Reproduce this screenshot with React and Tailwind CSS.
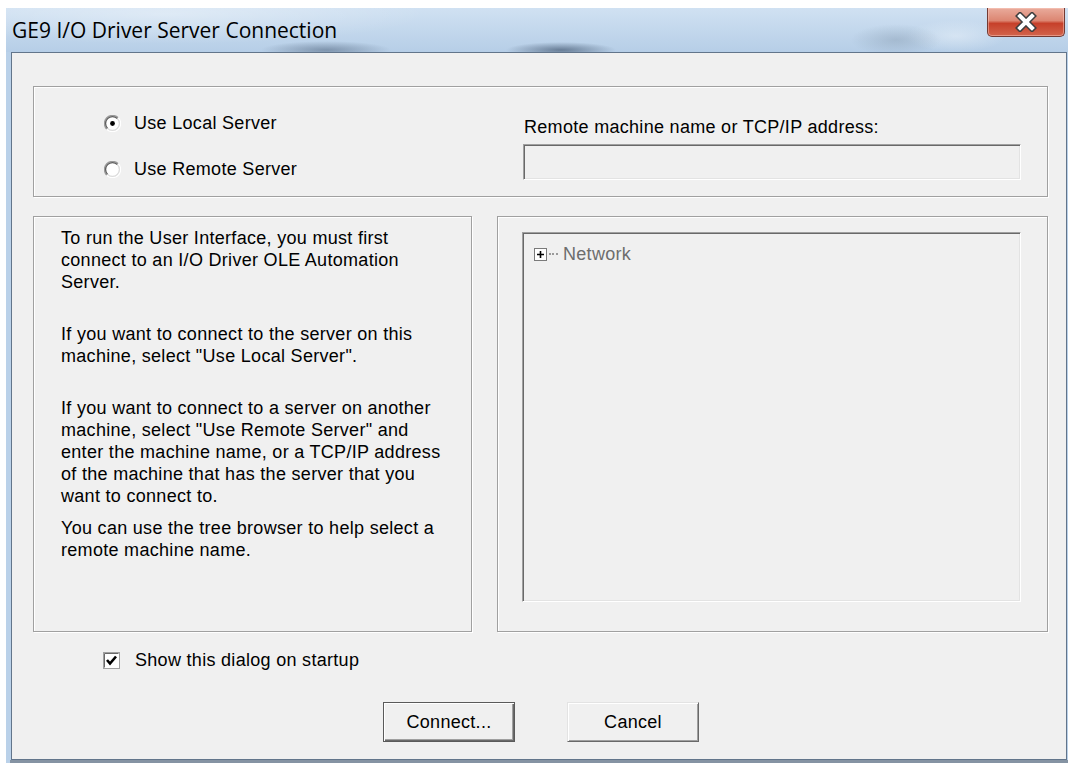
// Classic Win7 dialog: "GE9 I/O Driver Server Connection"

const RadioDot = ({ checked }) => (
  <svg width="17" height="17" viewBox="0 0 17 17" className="shrink-0">
    <circle cx="8.5" cy="8.5" r="6.5" fill="#ffffff" />
    <path d="M2.8 14.2 A8 8 0 0 1 14.2 2.8" fill="none" stroke="#9a9a9a" strokeWidth="1.3" />
    <path d="M3.6 13.4 A6.9 6.9 0 0 1 13.4 3.6" fill="none" stroke="#5e5e5e" strokeWidth="1.3" />
    <path d="M14.2 2.8 A8 8 0 0 1 2.8 14.2" fill="none" stroke="#ffffff" strokeWidth="1.3" />
    <path d="M13.4 3.6 A6.9 6.9 0 0 1 3.6 13.4" fill="none" stroke="#dcdcdc" strokeWidth="1.3" />
    {checked && <circle cx="8.5" cy="8.5" r="2.4" fill="#000000" />}
  </svg>
);

const CheckBox = () => (
  <svg width="17" height="17" viewBox="0 0 17 17" className="shrink-0">
    <rect x="0.5" y="0.5" width="16" height="16" fill="#ffffff" stroke="#a0a0a0" />
    <path d="M1.5 15.5 V1.5 H15.5" fill="none" stroke="#696969" />
    <path d="M4 8 L7 11.5 L13 4.5" fill="none" stroke="#000000" strokeWidth="2.6" />
  </svg>
);

const CloseGlyph = () => (
  <svg width="26" height="20" viewBox="0 0 26 20">
    <path d="M7 4 L19 16 M19 4 L7 16" stroke="#3d3d3d" strokeWidth="7" strokeLinecap="square" />
    <path d="M7 4 L19 16 M19 4 L7 16" stroke="#ffffff" strokeWidth="4" strokeLinecap="square" />
  </svg>
);

const GroupBox = ({ className = "", children }) => (
  <div
    className={`border border-[#a0a0a0] shadow-[inset_1px_1px_0_#ffffff,1px_1px_0_#ffffff] ${className}`}
  >
    {children}
  </div>
);

const Sunken = ({ className = "", children }) => (
  <div
    className={`border border-t-[#a0a0a0] border-l-[#a0a0a0] border-r-white border-b-white shadow-[inset_1px_1px_0_#696969,inset_-1px_-1px_0_#e3e3e3] bg-[#f0f0f0] ${className}`}
  >
    {children}
  </div>
);

const Button = ({ label, isDefault }) =>
  isDefault ? (
    <button className="w-[132px] h-[40px] border border-[#5a5a5a] bg-[#f0f0f0] shadow-[inset_1px_1px_0_#ffffff,inset_-1px_-1px_0_#696969,inset_-2px_-2px_0_#a0a0a0] text-black">
      {label}
    </button>
  ) : (
    <button className="w-[132px] h-[40px] border border-t-[#e3e3e3] border-l-[#e3e3e3] border-r-[#696969] border-b-[#696969] bg-[#f0f0f0] shadow-[inset_1px_1px_0_#ffffff,inset_-1px_-1px_0_#a0a0a0] text-black">
      {label}
    </button>
  );

const Paragraph = ({ lines, className = "" }) => (
  <div className={className}>
    {lines.map((l) => (
      <div key={l} className="whitespace-pre">
        {l}
      </div>
    ))}
  </div>
);

export default function App() {
  return (
    <div className="w-[1068px] h-[763px] bg-white pt-[8px] pl-[6px] flex flex-col overflow-hidden font-['Liberation_Sans',Arial,sans-serif]">
      <div className="flex-1 flex flex-col bg-[#bad1e9]">
        {/* title bar with blurred glass behind it */}
        <div className="h-[44px] flex items-start justify-between bg-[radial-gradient(ellipse_65px_9px_at_320px_42px,rgba(70,90,115,0.5),transparent),radial-gradient(ellipse_55px_8px_at_555px_42px,rgba(50,70,95,0.6),transparent),radial-gradient(ellipse_45px_16px_at_890px_32px,rgba(120,140,160,0.35),transparent),radial-gradient(ellipse_50px_16px_at_950px_28px,rgba(235,243,250,0.5),transparent),radial-gradient(ellipse_260px_30px_at_160px_6px,rgba(255,255,255,0.35),transparent),linear-gradient(to_bottom,#d0e1f2,#b6cee7)]">
          <div className="pl-[6px] pt-[8px] text-[21px] leading-[28px] text-[#000000] font-['Open_Sans',sans-serif]">
            GE9 I/O Driver Server Connection
          </div>
          <div className="mr-[3px] w-[78px] h-[29px] flex items-center justify-center rounded-b-[5px] border border-t-0 border-[#733a33] bg-[linear-gradient(to_bottom,#e9ab9c,#dc8672_45%,#c6402a_55%,#d2644c)] shadow-[inset_0_0_0_1px_rgba(255,210,200,0.45)]">
            <CloseGlyph />
          </div>
        </div>

        {/* client area */}
        <div className="flex-1 ml-[5px] mr-[1px] border border-[#62758b] bg-[#f0f0f0] pt-[33px] pl-[21px] pr-[18px] text-[18px] leading-[22px] tracking-[0.3px] text-black">
          <GroupBox className="h-[111px] flex">
            <div className="w-[489px] pl-[70px] pt-[25px] flex flex-col gap-[24px]">
              <label className="flex items-center gap-[13px] h-[22px]">
                <RadioDot checked />
                <span>Use Local Server</span>
              </label>
              <label className="flex items-center gap-[13px] h-[22px]">
                <RadioDot />
                <span>Use Remote Server</span>
              </label>
            </div>
            <div className="w-[498px] pt-[29px]">
              <div className="h-[22px] pl-px">Remote machine name or TCP/IP address:</div>
              <Sunken className="mt-[6px] h-[36px]" />
            </div>
          </GroupBox>

          <div className="mt-[19px] flex gap-[25px]">
            <GroupBox className="w-[439px] h-[416px] pl-[27px] pt-[10px]">
              <Paragraph
                lines={[
                  "To run the User Interface, you must first",
                  "connect to an I/O Driver OLE Automation",
                  "Server.",
                ]}
              />
              <Paragraph
                className="mt-[30px]"
                lines={[
                  "If you want to connect to the server on this",
                  'machine, select "Use Local Server".',
                ]}
              />
              <Paragraph
                className="mt-[30px]"
                lines={[
                  "If you want to connect to a server on another",
                  'machine, select "Use Remote Server" and',
                  "enter the machine name, or a TCP/IP address",
                  "of the machine that has the server that you",
                  "want to connect to.",
                ]}
              />
              <Paragraph
                className="mt-[10px]"
                lines={[
                  "You can use the tree browser to help select a",
                  "remote machine name.",
                ]}
              />
            </GroupBox>
            <GroupBox className="flex-1 h-[416px] pl-[24px] pt-[15px]">
              <Sunken className="w-[499px] h-[370px] pt-[10px] pl-[11px]">
                <div className="flex items-center h-[22px] text-[#6d6d6d]">
                  <span className="w-[13px] h-[13px] border border-[#7a7a7a] bg-white flex items-center justify-center shrink-0">
                    <svg width="9" height="9" viewBox="0 0 9 9">
                      <path d="M1 4.5 H8 M4.5 1 V8" stroke="#000000" strokeWidth="1.6" />
                    </svg>
                  </span>
                  <span className="w-[9px] mx-[2px] border-t-2 border-dotted border-[#9a9a9a] shrink-0" />
                  <span className="ml-[3px]">Network</span>
                </div>
              </Sunken>
            </GroupBox>
          </div>

          <label className="mt-[17px] ml-[70px] flex items-center gap-[15px] h-[22px]">
            <CheckBox />
            <span>Show this dialog on startup</span>
          </label>

          <div className="mt-[31px] pl-[350px] flex gap-[52px]">
            <Button label="Connect..." isDefault />
            <Button label="Cancel" />
          </div>
        </div>
        <div className="h-[3px] ml-[4px] bg-[#8593a3]" />
      </div>
    </div>
  );
}
